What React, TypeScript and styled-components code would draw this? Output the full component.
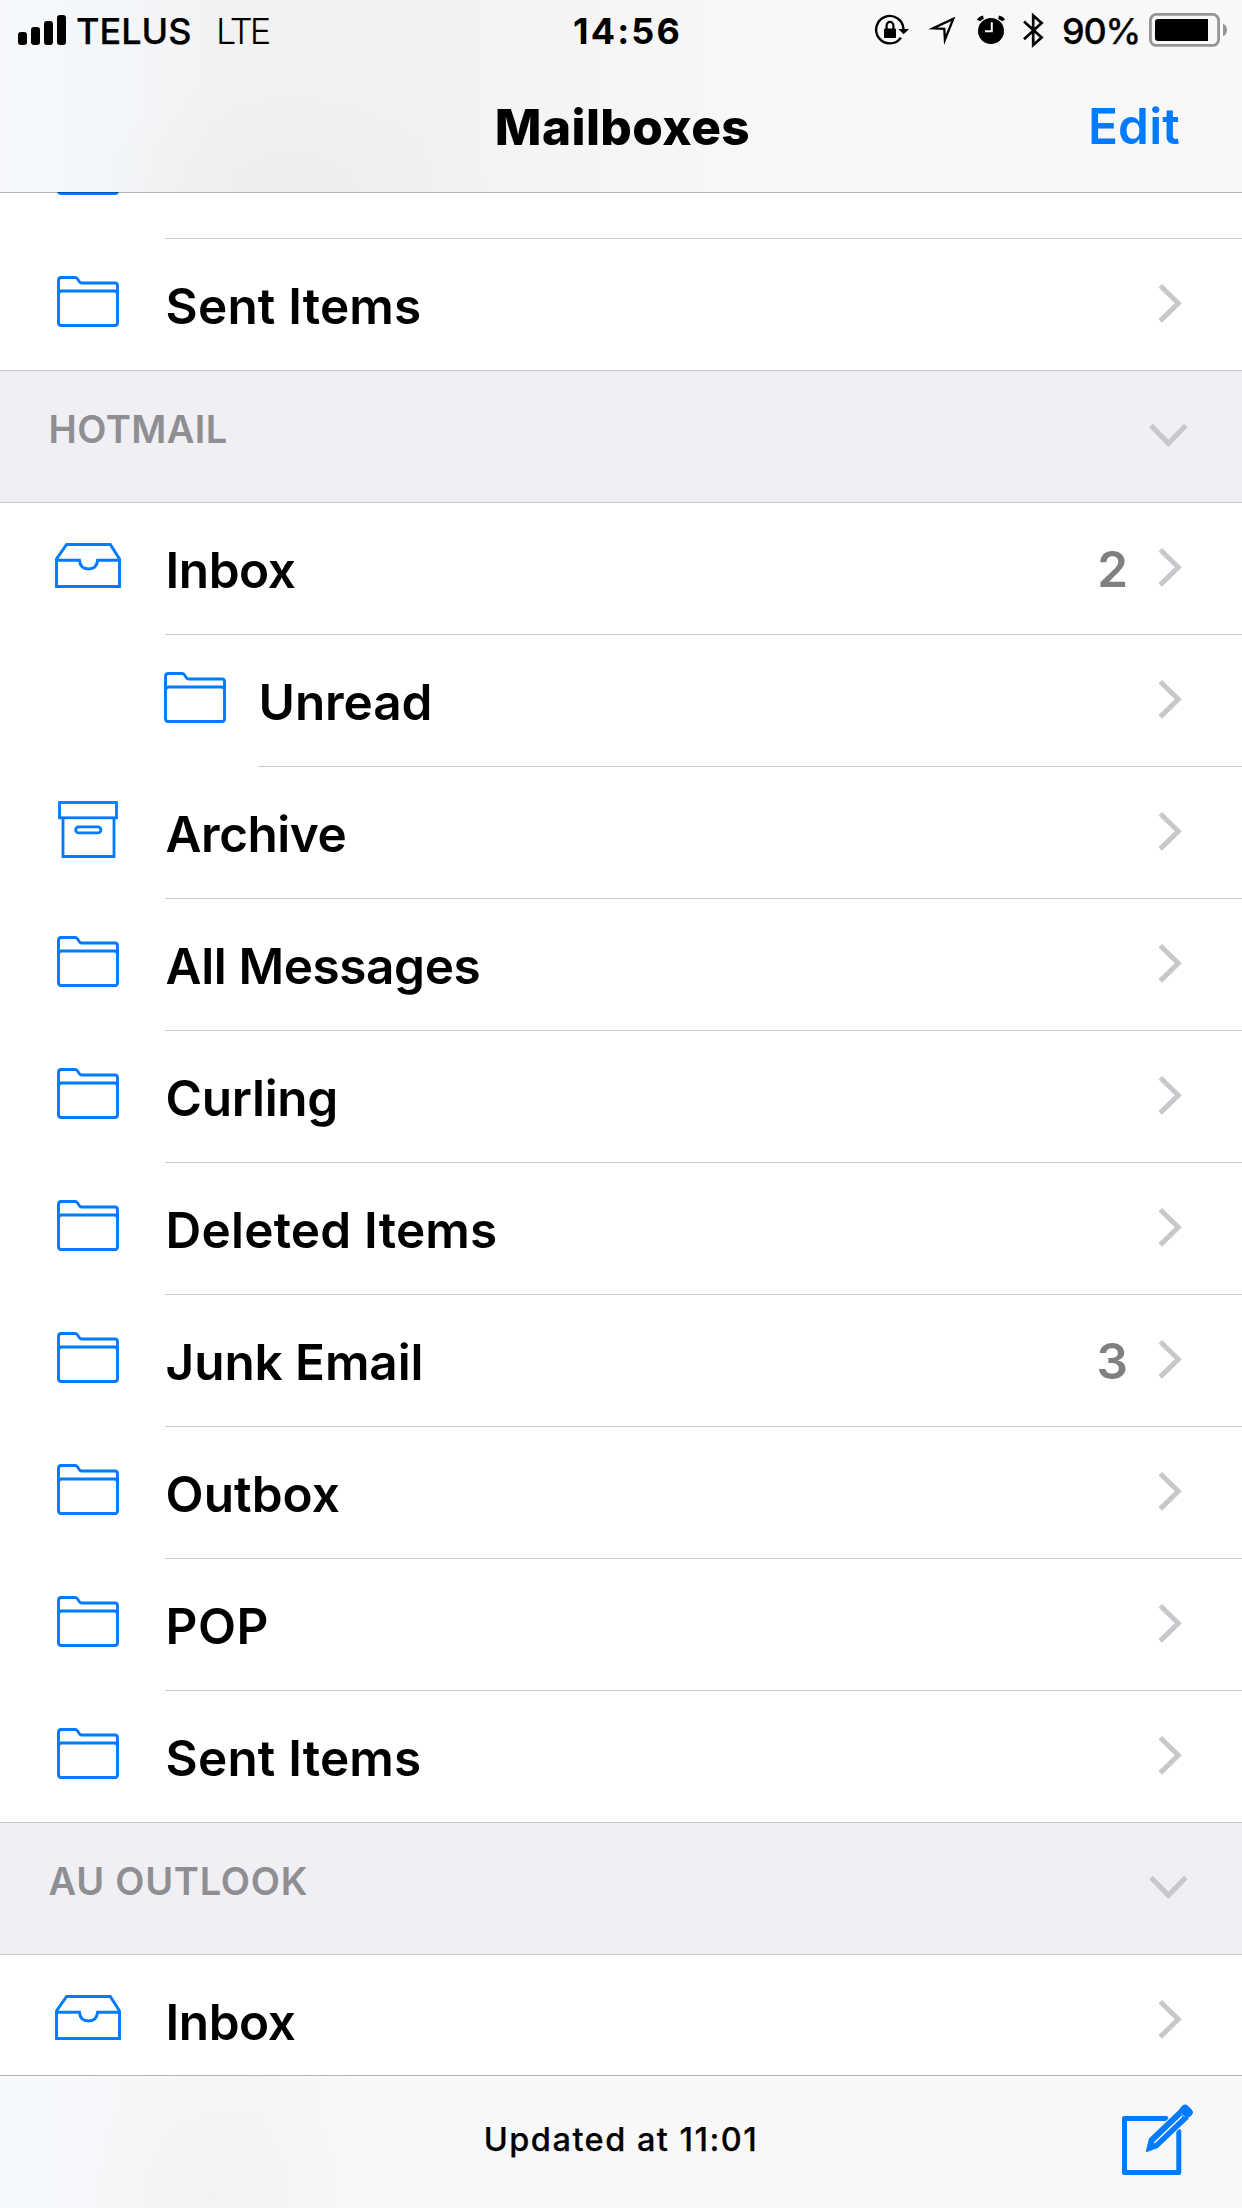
import React from "react";
import styled, { createGlobalStyle } from "styled-components";

const BLUE = "#007aff";
const HAIRLINE = "#c8c7cc";

const GlobalStyle = createGlobalStyle`
  * { box-sizing: border-box; }
  body {
    margin: 0;
    background: #fff;
    color: #000;
    font-family: Inter, "Liberation Sans", sans-serif;
  }
  svg { display: block; flex: none; }
`;

const Screen = styled.div`
  width: 1242px;
  height: 2208px;
  display: flex;
  flex-direction: column;
  overflow: hidden;
  background: #fff;
`;

/* ---------- Header ---------- */

const Header = styled.header`
  position: relative;
  z-index: 1;
  flex: none;
  height: 193px;
  border-bottom: 1px solid rgba(0, 0, 0, 0.3);
  background:
    radial-gradient(ellipse 200px 120px at 290px 192px, rgba(237, 237, 237, 0.9), rgba(240, 240, 240, 0) 100%),
    linear-gradient(90deg, #f7f9fb 0px, #f4f7fa 90px, #f2f2f3 230px, #f2f2f2 420px, #f5f5f6 600px, #f8f8f8 760px);
  background-clip: padding-box;
`;

const StatusBar = styled.div`
  display: grid;
  grid-template-columns: 1fr auto 1fr;
  height: 62px;
  line-height: 62px;
  font-size: 36px;
  font-weight: 500;
  white-space: nowrap;
`;

const StatusLeft = styled.div`
  display: flex;
  padding-left: 18px;
`;

const Signal = styled.div`
  display: flex;
  align-items: flex-end;
  gap: 4px;
  height: 45px;
  margin-right: 10px;
`;

const Bar = styled.i<{ $height: number }>`
  width: 9px;
  height: ${(p) => p.$height}px;
  border-radius: 3px;
  background: #000;
`;

const Carrier = styled.span`
  width: 140px;
  -webkit-text-stroke: 0.25px #000;
`;

const Network = styled.span`
  font-weight: 300;
  letter-spacing: -3px;
`;

const Clock = styled.time`
  padding-left: 13px;
  font-weight: 700;
  letter-spacing: 2.1px;
`;

const StatusRight = styled.div`
  display: flex;
  justify-content: flex-end;
  padding-right: 14px;
`;

const Percent = styled.span`
  margin: 0 9px 0 12px;
  letter-spacing: -1.2px;
  -webkit-text-stroke: 0.25px #000;
`;

const NavBar = styled.nav`
  display: grid;
  grid-template-columns: 1fr auto 1fr;
  height: 130px;
  font-size: 49.5px;
`;

const Title = styled.h1`
  grid-column: 2;
  margin: 0;
  padding-left: 3px;
  line-height: 130px;
  font-size: inherit;
  font-weight: 800;
  letter-spacing: 0.4px;
`;

const EditButton = styled.a`
  justify-self: end;
  padding-right: 62px;
  line-height: 128px;
  font-weight: 600;
  letter-spacing: 0.2px;
  color: ${BLUE};
`;

/* ---------- List ---------- */

const List = styled.main`
  flex: none;
  height: 1883px;
  margin-top: -1px;
  overflow: hidden;
`;

/* The list is scrolled: its first row is mostly under the header. */
const Scrolled = styled.div`
  margin-top: -85px;
`;

const Row = styled.div<{ $indent?: boolean; $last?: boolean }>`
  display: flex;
  height: 132px;
  padding-left: ${(p) => (p.$indent ? 162 : 55)}px;
  border-bottom: ${(p) => (p.$last ? `1px solid ${HAIRLINE}` : "none")};
`;

const IconSlot = styled.div<{ $indent?: boolean }>`
  flex: none;
  display: flex;
  align-items: center;
  width: ${(p) => (p.$indent ? 96 : 110)}px;
  height: 125px;
`;

const IconBox = styled.div`
  display: flex;
  justify-content: center;
  width: 66px;
`;

const RowBody = styled.div<{ $last?: boolean }>`
  flex: 1;
  display: flex;
  padding: 0 60px 0 0.6px;
  border-bottom: ${(p) => (p.$last ? "none" : `1px solid ${HAIRLINE}`)};
`;

const Label = styled.span<{ $tracking: number }>`
  flex: 1;
  height: 131px;
  line-height: 134px;
  font-size: 49.5px;
  font-weight: 600;
  letter-spacing: ${(p) => p.$tracking}px;
  white-space: nowrap;
`;

const Count = styled.span`
  height: 131px;
  margin-right: 30px;
  line-height: 132px;
  font-size: 49.5px;
  font-weight: 600;
  color: #808080;
`;

const Disclosure = styled.div`
  padding-top: 44px;
`;

const SectionHeader = styled.div`
  display: flex;
  justify-content: space-between;
  height: 132px;
  padding: 0 54px 0 48.5px;
  border-bottom: 1px solid ${HAIRLINE};
  background: #efeff4;
`;

const SectionName = styled.h2<{ $tracking: number }>`
  margin: 0;
  line-height: 116px;
  font-size: 38px;
  font-weight: 600;
  letter-spacing: ${(p) => p.$tracking}px;
  color: #8e8e93;
`;

const Collapse = styled.div`
  padding-top: 52px;
`;

/* ---------- Toolbar ---------- */

const Toolbar = styled.footer`
  flex: none;
  display: grid;
  grid-template-columns: 1fr auto 1fr;
  height: 133px;
  border-top: 1px solid #b2b2b2;
  background:
    radial-gradient(ellipse 130px 140px at 215px 120px, rgba(242, 242, 242, 0.8), rgba(244, 244, 244, 0) 100%),
    linear-gradient(90deg, #f6f9fc 0px, #f6f7f9 120px, #f6f6f6 260px, #f8f8f8 380px);
`;

const Updated = styled.span`
  grid-column: 2;
  line-height: 128px;
  font-size: 32.5px;
  font-weight: 500;
  letter-spacing: 1.48px;
  -webkit-text-stroke: 0.25px #000;
`;

const Compose = styled.div`
  justify-self: end;
  padding: 24px 42px 0 0;
`;

/* ---------- Icons ---------- */

const FolderIcon = () => (
  <svg width="62" height="51" viewBox="0 0 62 51" fill="none" stroke={BLUE} strokeWidth="2.9">
    <path d="M1.5 46.8V4.5Q1.5 1.5 4.5 1.5H18Q19.6 1.5 20.6 3L22.4 5.7Q23.3 7 24.8 7H58Q60.5 7 60.5 9.8V46.8Q60.5 49.5 58 49.5H4.3Q1.5 49.5 1.5 46.8Z" />
    <path d="M1.5 18Q1.8 15 4.6 15H57.5Q60.3 15 60.5 18" />
  </svg>
);

const InboxIcon = () => (
  <svg width="66" height="45" viewBox="0 0 66 45" fill="none" stroke={BLUE} strokeWidth="2.9">
    <path d="M1.5 16V43.5H64.5V16L55.3 1.5H11.6Z" />
    <path d="M1.5 17.2H24.4Q25.2 26 33.5 26Q41.8 26 42.6 17.2H64.5" />
  </svg>
);

const ArchiveIcon = () => (
  <svg width="60" height="57" viewBox="0 0 60 57" fill="none" stroke={BLUE} strokeWidth="2.8">
    <rect x="1.5" y="1.5" width="57" height="15.3" />
    <path d="M5 16.8V55.5H56V16.8" />
    <rect x="17.7" y="25.9" width="25.2" height="6" rx="3" />
  </svg>
);

const ChevronRight = () => (
  <svg width="24" height="40" viewBox="0 0 24 40" fill="none" stroke="#c7c7cc" strokeWidth="5">
    <path d="M2.2 2.8L20.3 20.3L2.2 37.9" />
  </svg>
);

const ChevronDown = () => (
  <svg width="40" height="24" viewBox="0 0 40 24" fill="none" stroke="#c7c7cc" strokeWidth="5">
    <path d="M3 2.5L20.4 20.3L37.8 2.5" />
  </svg>
);

const StatusIcons = () => (
  <svg width="180" height="62" viewBox="870 0 180 62" fill="none" stroke="#000">
    {/* rotation lock */}
    <path d="M903.5 29A13.7 13.7 0 1 0 901 37.6" strokeWidth="2.4" />
    <path d="M898.3 29H909L903.6 34.3Z" fill="#000" stroke="none" />
    <rect x="884" y="28.6" width="12" height="9.4" rx="1" fill="#000" stroke="none" />
    <path d="M886.6 29V25.6A3.3 3.6 0 0 1 893.4 25.6V29" strokeWidth="2.2" />
    {/* location */}
    <path d="M953.2 18.9L933 28.3L944.3 28.9L944.9 39.8Z" strokeWidth="2.3" strokeMiterlimit="12" />
    {/* alarm */}
    <circle cx="991" cy="31" r="13" fill="#000" stroke="none" />
    <path d="M978.6 20.6Q979.8 18 983.4 17.2M1003.4 20.6Q1002.2 18 998.6 17.2" strokeWidth="3.6" />
    <path d="M991.8 22.3V31.3H985" stroke="#f8f8f8" strokeWidth="2" />
    {/* bluetooth */}
    <path d="M1024 21.6L1041.6 37.6L1033.2 45V15.6L1041.6 23L1024 39.2" strokeWidth="2.7" strokeMiterlimit="10" />
  </svg>
);

const BatteryIcon = () => (
  <svg width="79" height="62" viewBox="1149 0 79 62">
    <rect x="1150.4" y="14.4" width="68.2" height="31" rx="6" fill="none" stroke="#959595" strokeWidth="2.8" />
    <path d="M1158 19H1208V41H1158Q1155 41 1155 38V22Q1155 19 1158 19Z" />
    <path d="M1223 23.7Q1227 25.5 1227 30T1223 36.2Z" fill="#959595" />
  </svg>
);

const ComposeIcon = () => (
  <svg width="80" height="80" viewBox="0 0 80 80" fill="none">
    <path d="M46 18.5H4.5V72.5H58.8V31.5" stroke={BLUE} strokeWidth="5" strokeLinecap="round" strokeLinejoin="round" />
    <path
      d="M29 38.6L59.5 9.2L68.8 18.4L37.8 48L27 51.9Q25.6 52 26 50.4Z"
      fill={BLUE}
      stroke="#f8f8f8"
      strokeWidth="2"
      paintOrder="stroke"
    />
    <path d="M34.2 43L62 16.2" stroke="#f8f8f8" strokeWidth="1.5" />
    <path d="M61.5 13L65 16.6" stroke="#f8f8f8" strokeWidth="1.8" />
    <rect x="-5" y="-6.6" width="10" height="13.2" rx="4" fill={BLUE} transform="translate(66.2 11.2) rotate(-45)" />
  </svg>
);

const icons = { folder: FolderIcon, inbox: InboxIcon, archive: ArchiveIcon };

/* ---------- Data ---------- */

type Mailbox = {
  name: string;
  icon: keyof typeof icons;
  tracking?: number;
  count?: number;
  indent?: boolean;
};

type Account = { name?: string; tracking?: number; mailboxes: Mailbox[] };

const accounts: Account[] = [
  {
    mailboxes: [
      { name: "RSS Feeds", icon: "folder" },
      { name: "Sent Items", icon: "folder", tracking: 0.17 },
    ],
  },
  {
    name: "HOTMAIL",
    tracking: 0.44,
    mailboxes: [
      { name: "Inbox", icon: "inbox", tracking: -0.45, count: 2 },
      { name: "Unread", icon: "folder", tracking: -0.1, indent: true },
      { name: "Archive", icon: "archive", tracking: -0.5 },
      { name: "All Messages", icon: "folder", tracking: -0.4 },
      { name: "Curling", icon: "folder", tracking: -0.27 },
      { name: "Deleted Items", icon: "folder", tracking: 0.2 },
      { name: "Junk Email", icon: "folder", tracking: -0.1, count: 3 },
      { name: "Outbox", icon: "folder", tracking: 0.05 },
      { name: "POP", icon: "folder", tracking: 0.5 },
      { name: "Sent Items", icon: "folder", tracking: 0.17 },
    ],
  },
  {
    name: "AU OUTLOOK",
    tracking: 0.75,
    mailboxes: [{ name: "Inbox", icon: "inbox", tracking: -0.45 }],
  },
];

const MailboxRow = ({ box, last }: { box: Mailbox; last: boolean }) => {
  const Icon = icons[box.icon];
  return (
    <Row $indent={box.indent} $last={last}>
      <IconSlot $indent={box.indent}>
        <IconBox>
          <Icon />
        </IconBox>
      </IconSlot>
      <RowBody $last={last}>
        <Label $tracking={box.tracking ?? 0}>{box.name}</Label>
        {box.count !== undefined && <Count>{box.count}</Count>}
        <Disclosure>
          <ChevronRight />
        </Disclosure>
      </RowBody>
    </Row>
  );
};

export default function App() {
  return (
    <>
      <GlobalStyle />
      <Screen>
        <Header>
          <StatusBar>
            <StatusLeft>
              <Signal>
                {[13, 18, 24, 30].map((h) => (
                  <Bar key={h} $height={h} />
                ))}
              </Signal>
              <Carrier>TELUS</Carrier>
              <Network>LTE</Network>
            </StatusLeft>
            <Clock>14:56</Clock>
            <StatusRight>
              <StatusIcons />
              <Percent>90%</Percent>
              <BatteryIcon />
            </StatusRight>
          </StatusBar>
          <NavBar>
            <Title>Mailboxes</Title>
            <EditButton>Edit</EditButton>
          </NavBar>
        </Header>
        <List>
          <Scrolled>
            {accounts.map((account, a) => (
              <React.Fragment key={a}>
                {account.name && (
                  <SectionHeader>
                    <SectionName $tracking={account.tracking ?? 0}>{account.name}</SectionName>
                    <Collapse>
                      <ChevronDown />
                    </Collapse>
                  </SectionHeader>
                )}
                {account.mailboxes.map((box, i) => (
                  <MailboxRow key={i} box={box} last={i === account.mailboxes.length - 1} />
                ))}
              </React.Fragment>
            ))}
          </Scrolled>
        </List>
        <Toolbar>
          <Updated>Updated at 11:01</Updated>
          <Compose>
            <ComposeIcon />
          </Compose>
        </Toolbar>
      </Screen>
    </>
  );
}
